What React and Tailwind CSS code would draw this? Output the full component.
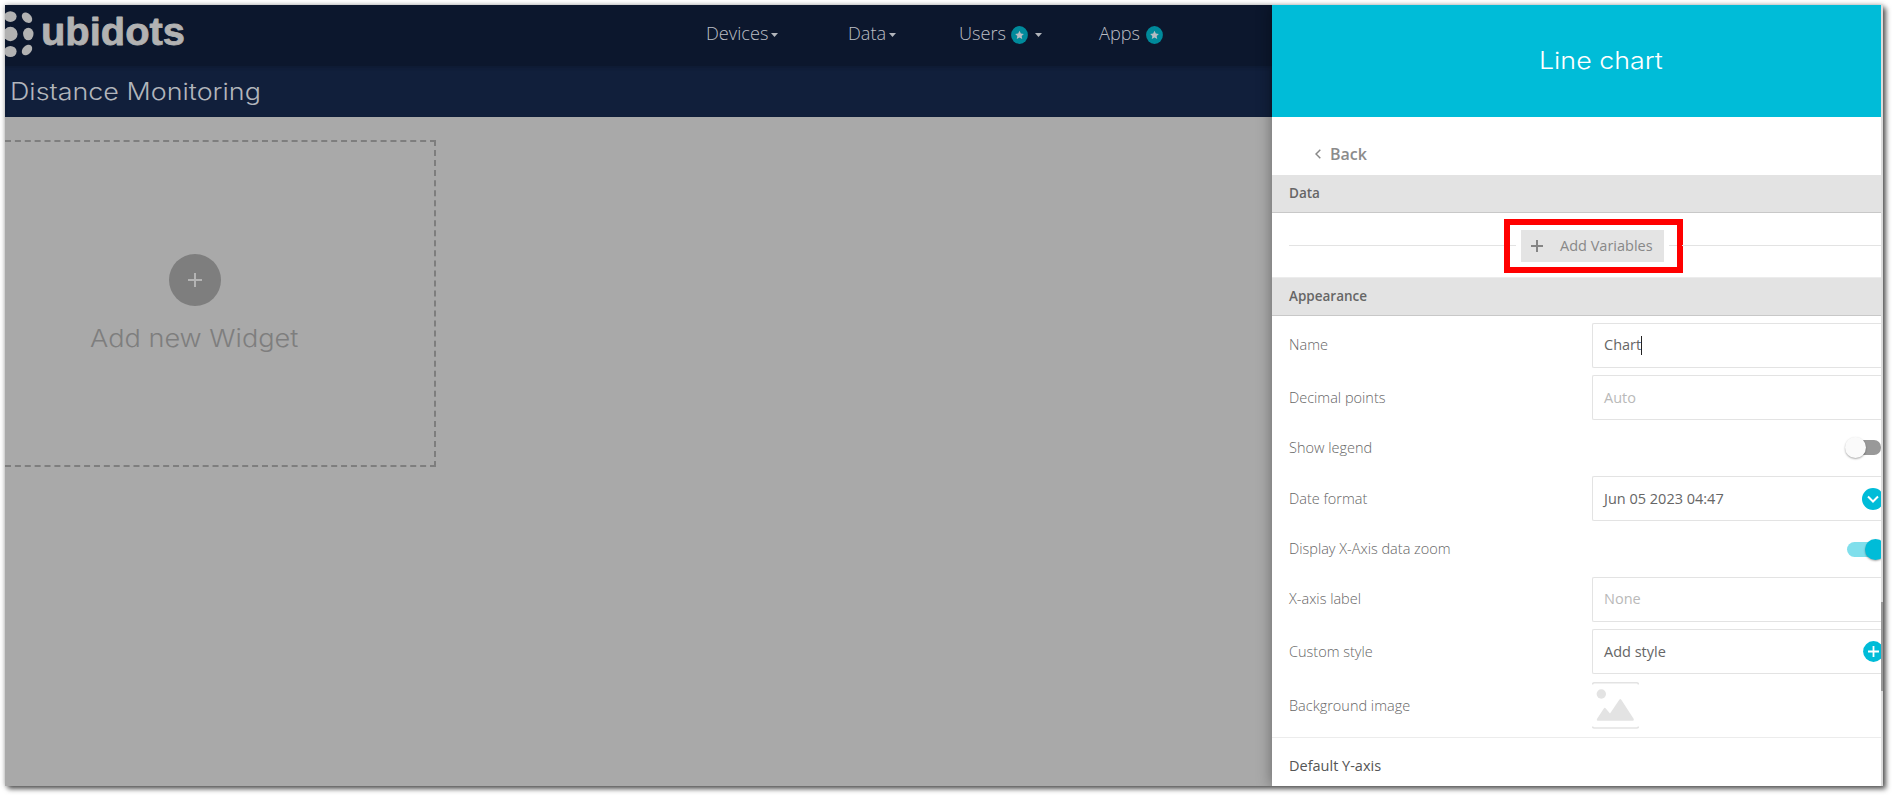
import React from "react";

function Field({ children, className = "" }) {
  return (
    <div className={"flex h-[45px] flex-1 items-center rounded-l-[2px] border border-r-0 border-[#e3e3e3] pl-[11px] text-[14.5px] whitespace-nowrap " + className}>
      {children}
    </div>
  );
}

function Row({ title, h, children }) {
  return (
    <div className={"flex shrink-0 items-center pl-[17px] " + h}>
      <span className="w-[303px] shrink-0 whitespace-nowrap text-[14.5px] font-light text-[#666]">{title}</span>
      {children}
    </div>
  );
}

function SectionTitle({ children, className = "" }) {
  return (
    <div className={"flex shrink-0 items-center border-b border-b-[#c8c8c8] bg-[#e3e3e3] pl-[17px] text-[13.5px] font-semibold text-[#666] " + className}>
      {children}
    </div>
  );
}

function Star() {
  return (
    <svg className="h-[18px] w-[17px] shrink-0" viewBox="0 0 17 18">
      <ellipse cx="8.5" cy="9" rx="8.4" ry="8.900" fill="#008a9b" />
      <path d="M8.500 4.700l1.350 2.800 3 .4-2.200 2.100.55 3-2.700-1.450-2.700 1.450.55-3-2.200-2.100 3-.4z" fill="#b5bcc2" />
    </svg>
  );
}

function Caret({ className = "mt-[4px]" }) {
  return (
    <svg className={"h-[4px] w-[7px] shrink-0 " + className} viewBox="0 0 7 4">
      <path d="M0 0h7L3.500 4z" fill="#b2b5bb" />
    </svg>
  );
}

function Logo() {
  return (
    <svg className="block h-[60px] w-[185px]" viewBox="0 0 185 60">
      <g fill="#b2b2b2">
        <ellipse cx="5.400" cy="11.600" rx="6.200" ry="5.300" />
        <circle cx="5.400" cy="29" r="7.200" />
        <ellipse cx="5.400" cy="46.500" rx="6.200" ry="5.500" />
        <ellipse cx="22" cy="12.700" rx="6" ry="4.300" transform="rotate(45 22 12.700)" />
        <ellipse cx="23.300" cy="29" rx="5.200" ry="6.300" />
        <ellipse cx="22" cy="45" rx="6" ry="4.300" transform="rotate(-45 22 45)" />
      </g>
      <text x="36" y="39.500" textLength="144" lengthAdjust="spacingAndGlyphs" fontFamily="Liberation Sans" fontWeight="700" fontSize="39.500" fill="#b2b2b2" stroke="#b2b2b2" strokeWidth="0.8" strokeLinejoin="round">ubidots</text>
    </svg>
  );
}

export default function App() {
  return (
    <div className="h-[795px] w-[1892px] overflow-hidden bg-white pl-[5px] pt-[5px] font-['Open_Sans',sans-serif]">
      <div className="h-[781px] w-[1878px] shadow-[3px_3px_5px_0px_rgba(0,0,0,0.6),0_0_5px_rgba(0,0,0,0.3)]">
        <div className="flex h-full w-full overflow-hidden bg-[#a9a9a9]">
          <main className="w-[1267px] shrink-0">
            <header className="flex h-[61px] bg-[#0c172d] text-[18.2px] font-light text-[#bcbfc5]">
              <div className="w-[701px]"><Logo /></div>
              <nav className="flex h-[57px] items-center whitespace-nowrap">
                <span className="flex w-[142px] items-center gap-[3px]">Devices<Caret /></span>
                <span className="flex w-[111px] items-center gap-[3px]">Data<Caret /></span>
                <span className="flex w-[140px] items-center gap-[5px]">Users<span className="flex items-center gap-[7px] pt-[3px]"><Star /><Caret className="" /></span></span>
                <span className="flex items-center gap-[6px]">Apps<span className="pt-[3px]"><Star /></span></span>
              </nav>
            </header>
            <div className="flex h-[51px] items-center bg-[#111f3b] pl-[5px] text-[#b2b5bb] shadow-[inset_0_2px_3px_rgba(12,23,45,0.5)]">
              <h1 className="origin-left scale-x-[1.145] font-['Inter',sans-serif] text-[23.5px] font-light">Distance Monitoring</h1>
            </div>
            <div className="pt-[23px]">
              <div className="flex h-[327px] w-[431px] flex-col items-center border-2 border-l-0 border-dashed border-[#7e7e7e] pr-[50px] pt-[112px]">
                <div className="flex h-[52px] w-[52px] items-center justify-center rounded-full bg-[#7e7e7e]">
                  <svg className="h-[14px] w-[14px]" viewBox="0 0 14 14" stroke="#b4b4b4" strokeWidth="2"><path d="M7 0v14M0 7h14" /></svg>
                </div>
                <span className="mt-[15px] scale-x-[1.13] font-['Inter',sans-serif] text-[24px] font-light text-[#7e7e7e]">Add new Widget</span>
              </div>
            </div>
          </main>
          <aside className="z-10 flex w-[609px] shrink-0 flex-col bg-white shadow-[0_0_14px_rgba(0,0,0,0.4)]">
            <div className="flex h-[112px] w-full shrink-0 items-center bg-[#00bcd8] pl-[267px] text-white">
              <h2 className="origin-left scale-x-[1.14] whitespace-nowrap font-['Inter',sans-serif] text-[23.5px] font-light">Line chart</h2>
            </div>
            <div className="flex h-[58px] shrink-0 items-center gap-[9px] pl-[43px] pt-[16px] text-[16px] font-semibold text-[#8b8b8b]">
              <svg className="h-[10px] w-[6px]" viewBox="0 0 6 10" fill="none" stroke="#888" strokeWidth="1.500"><path d="M5.300.8L1 5l4.300 4.200" /></svg>
              Back
            </div>
            <SectionTitle className="h-[38px]">Data</SectionTitle>
            <div className="flex h-[64px] shrink-0 items-center pl-[17px] pt-px">
              <div className="h-px w-[216px] bg-[#e3e3e3]" />
              <div className="-mx-px flex h-[54px] w-[179px] shrink-0 items-center justify-center border-[6px] border-[#ff0000] bg-white">
                <div className="h-px w-[6px] bg-[#e3e3e3]" />
                <div className="mx-[5px] flex h-[32px] w-[143px] shrink-0 items-center bg-[#e4e4e4] pl-[10px] text-[14.5px] text-[#888]">
                  <svg className="mr-[17px] h-[12px] w-[12px] shrink-0" viewBox="0 0 12 12" stroke="#858585" strokeWidth="2"><path d="M6 0v12M0 6h12" /></svg>
                  <span className="whitespace-nowrap">Add Variables</span>
                </div>
                <div className="h-px w-[8px] bg-[#e3e3e3]" />
              </div>
              <div className="h-px flex-1 bg-[#e3e3e3]" />
            </div>
            <SectionTitle className="h-[39px] border-t border-t-[#ececec]">Appearance</SectionTitle>
            <div className="flex flex-col pt-[3px]">
              <Row title="Name" h="h-[52px]"><Field className="text-[#666]">Chart<span className="h-[19px] w-px bg-[#222]" /></Field></Row>
              <Row title="Decimal points" h="h-[53px]"><Field className="text-[#b9b9b9]">Auto</Field></Row>
              <Row title="Show legend" h="h-[47px]">
                <div className="flex flex-1 justify-end">
                  <div className="flex h-[15px] w-[32px] items-center rounded-r-[7px] bg-[#999]">
                    <div className="-ml-[4px] h-[21px] w-[21px] shrink-0 rounded-full bg-[#fafafa] shadow-[0_1px_2px_rgba(0,0,0,0.35)]" />
                  </div>
                </div>
              </Row>
              <Row title="Date format" h="h-[55px]">
                <Field className="justify-between overflow-hidden text-[#666]">
                  Jun 05 2023 04:47
                  <svg className="-mr-[3px] h-[22px] w-[22px]" viewBox="0 0 22 22" fill="none"><circle cx="11" cy="11" r="11" fill="#00bcd8" /><path d="M6 8.500l5 5 5-5" stroke="#fff" strokeWidth="2" /></svg>
                </Field>
              </Row>
              <Row title="Display X-Axis data zoom" h="h-[46px]">
                <div className="flex flex-1 justify-end">
                  <div className="flex h-[15px] w-[34px] items-center rounded-l-full bg-[#80dfec]">
                    <div className="ml-[18px] h-[21px] w-[21px] shrink-0 rounded-full bg-[#00bcd8] shadow-[0_1px_2px_rgba(0,0,0,0.35)]" />
                  </div>
                </div>
              </Row>
              <Row title="X-axis label" h="h-[54px]"><Field className="text-[#b9b9b9]">None</Field></Row>
              <Row title="Custom style" h="h-[51px]">
                <Field className="justify-between overflow-hidden text-[#666]">
                  Add style
                  <svg className="-mr-[3px] h-[21px] w-[21px]" viewBox="0 0 21 21"><circle cx="10.500" cy="10.500" r="10.400" fill="#00bcd8" /><path d="M10.500 5v11M5 10.500h11" stroke="#fff" strokeWidth="1.800" /></svg>
                </Field>
              </Row>
              <Row title="Background image" h="h-[57px]">
                <svg className="-mt-px h-[47px] w-[47px]" viewBox="0 0 47 47">
                  <path d="M.5 2.500Q.5.800 2.500.800h42Q46.500.800 46.500 2.500M.5 44.500Q.5 46 2.500 46h42Q46.500 46 46.500 44.500" fill="none" stroke="#e3e3e3" strokeWidth="1.600" />
                  <circle cx="9.300" cy="12" r="4.700" fill="#e3e3e3" />
                  <path d="M5.500 38.800q-1.300-.6-.4-2L11.800 26.600q1-1.500 2 0L18 31.500l9.300-13.700q1-1.400 2 0L41.600 36.800q.8 1.500-.5 2z" fill="#e3e3e3" />
                </svg>
              </Row>
            </div>
            <div className="mt-[3px] flex h-[57px] shrink-0 items-center border-t border-[#ececec] pl-[17px] text-[14.5px] text-[#555]">Default Y-axis</div>
          </aside>
          <div className="z-20 w-[2px] shrink-0 bg-[#dcdcdc] pt-[597px]"><div className="h-[89px] bg-[#999]" /></div>
        </div>
      </div>
    </div>
  );
}
